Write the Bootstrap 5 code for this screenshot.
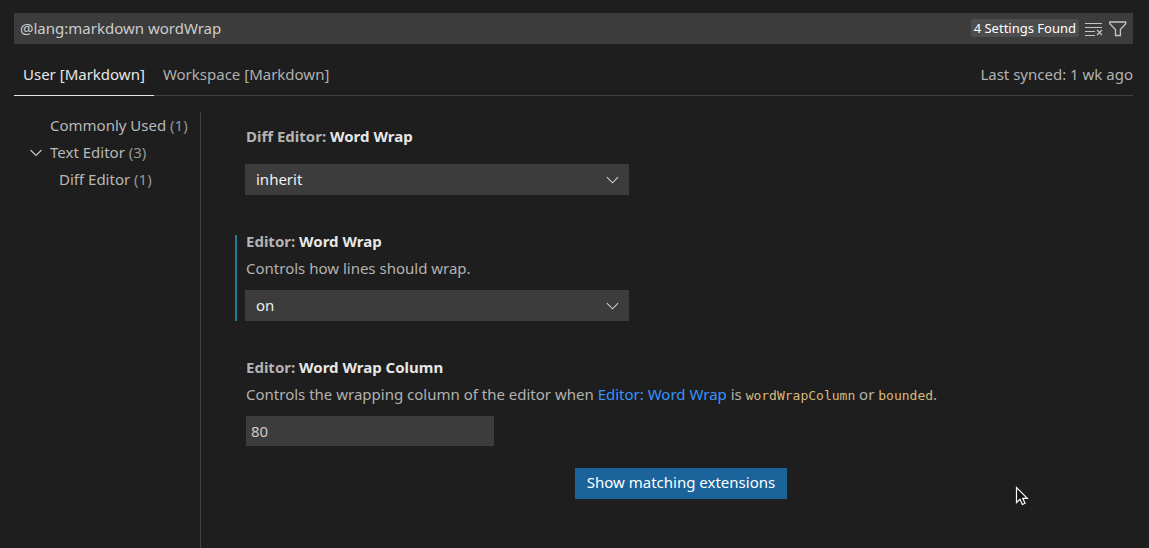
<!DOCTYPE html>
<html lang="en">
<head>
<meta charset="utf-8">
<meta name="viewport" content="width=device-width, initial-scale=1">
<title>Settings</title>
<link href="https://cdn.jsdelivr.net/npm/bootstrap@5.3.0/dist/css/bootstrap.min.css" rel="stylesheet">
<style>
  body { background: #1e1e1e; color: #b2b2b2; font: 15px/22px "Noto Sans", "Open Sans", sans-serif; }
  .settings { padding: 13px 16px 0 14px; }
  .search-bar { background: #3c3c3c; height: 31px; padding: 0 6px 2px 0; }
  .search-bar .form-control { padding: 0 6px; }
  .form-control, .form-select, .form-control:focus, .form-select:focus {
    background-color: #3c3c3c; color: #ccc; border: 0; border-radius: 0; box-shadow: none;
    font-size: 15px; line-height: 22px;
  }
  .found { background: #4d4d4d; color: #fff; font-size: 13px; line-height: 18px; padding: 0 3px; border-radius: 3px; }
  .icon-btn { background: none; border: 0; padding: 0; width: 18px; height: 18px; display: flex; color: #c5c5c5; margin-left: 6px; }
  .scopes { border-bottom: 1px solid #414141; margin-top: 10px; }
  .scope { background: none; border: 0; border-bottom: 1px solid transparent; color: #b0b0b0; padding: 9px 9px 10px; margin-bottom: -1px; }
  .scope.active { color: #e7e7e7; border-color: #e7e7e7; }
  .synced { padding-top: 9px; }
  .toc { flex: 0 0 187px; border-right: 1px solid #414141; }
  .toc a { display: flex; align-items: center; color: #b8b8b8; text-decoration: none; line-height: 27px; padding-left: 36px; white-space: pre; }
  .toc .parent { padding-left: 16px; }
  .toc .child { padding-left: 45px; line-height: 26px; }
  .toc span { color: #969696; }
  .options { padding: 18px 6px 48px 34px; }
  .option { padding-left: 11px; margin-bottom: 40px; }
  .option h2 { font-size: 15px; line-height: 12px; font-weight: 700; color: #b4b4b4; margin: 0; }
  .option h2 b { color: #e7e7e7; font-weight: 700; }
  .option h2.lone { margin-bottom: 22px; }
  .option p { margin: 10px 0 11px; }
  .option a { color: #3794ff; text-decoration: none; }
  .option code { font: 13px/16px "DejaVu Sans Mono", monospace; color: #d7ba7d; }
  .option .form-select { color: #f0f0f0; max-width: 384px; height: 31px; padding: 0 32px 1px 11px; margin-left: -1px;
    background-image: url("data:image/svg+xml,%3Csvg xmlns='http://www.w3.org/2000/svg' viewBox='0 0 14 8'%3E%3Cpath fill='none' stroke='%23d0d0d0' stroke-width='1.2' d='m1 1 6 6 6-6'/%3E%3C/svg%3E");
    background-size: 13px 8px; background-position: right 10px center; }
  .option .form-control { max-width: 248px; height: 30px; padding: 0 5px; }
  .modified { border-left: 2px solid #1b7e9c; padding-left: 9px; }
  .extensions, .extensions:hover { background: #1a639b; color: #fff; border: 0; border-radius: 0; padding: 3px 12px 6px; font-size: 15px; line-height: 22px; }
  .apply { margin-top: 22px; }
  .pointer { right: 120px; bottom: 41px; pointer-events: none; }
</style>
</head>
<body>
<div class="settings d-flex flex-column min-vh-100 position-relative">
  <div class="search-bar d-flex align-items-center">
    <input class="form-control flex-fill" type="text" aria-label="Search settings" value="@lang:markdown wordWrap">
    <span class="found text-nowrap">4 Settings Found</span>
    <button class="icon-btn" type="button" aria-label="Clear search">
      <svg width="18" height="18" viewBox="0 0 18 18" fill="none" stroke="currentColor" stroke-width="1.2"><path d="M0 4.500h17M0 8.500h17M0 12.500h10M0 16.500h10M12 11l5 5M17 11l-5 5"/></svg>
    </button>
    <button class="icon-btn" type="button" aria-label="Filter settings">
      <svg width="18" height="18" viewBox="0 0 18 18" fill="none" stroke="currentColor" stroke-width="1.3"><path d="M.8 3h15.900v1.800l-5.300 5.800v5.900H6.500v-5.900L.8 4.800z"/></svg>
    </button>
  </div>
  <div class="scopes d-flex align-items-start">
    <button class="scope active" type="button">User [Markdown]</button>
    <button class="scope" type="button">Workspace [Markdown]</button>
    <div class="synced ms-auto">Last synced: 1 wk ago</div>
  </div>
  <div class="d-flex flex-fill pt-3">
    <nav class="toc" aria-label="Setting groups">
      <a href="#">Commonly Used <span>(1)</span></a>
      <a class="parent" href="#"><svg class="me-2" width="12" height="8" viewBox="0 0 12 8" fill="none" stroke="#c5c5c5" stroke-width="1.2"><path d="m.5 1 5.500 5.500 5.500-5.500"/></svg>Text Editor <span>(3)</span></a>
      <a class="child" href="#">Diff Editor <span>(1)</span></a>
    </nav>
    <main class="options flex-fill">
      <section class="option">
        <h2 class="lone"><label for="diffWrap">Diff Editor: <b>Word Wrap</b></label></h2>
        <select class="form-select" id="diffWrap"><option>off</option><option>on</option><option selected>inherit</option></select>
      </section>
      <section class="option modified">
        <h2><label for="wrap">Editor: <b>Word Wrap</b></label></h2>
        <p>Controls how lines should wrap.</p>
        <select class="form-select" id="wrap"><option>off</option><option selected>on</option><option>wordWrapColumn</option><option>bounded</option></select>
      </section>
      <section class="option mb-0">
        <h2><label for="wrapColumn">Editor: <b>Word Wrap Column</b></label></h2>
        <p>Controls the wrapping column of the editor when <a href="#wrap">Editor: Word Wrap</a> is <code>wordWrapColumn</code> or <code>bounded</code>.</p>
        <input class="form-control" id="wrapColumn" type="text" inputmode="numeric" value="80">
      </section>
      <div class="apply text-center"><button class="btn extensions" type="button">Show matching extensions</button></div>
    </main>
  </div>
  <svg class="pointer position-absolute" width="14" height="21" viewBox="0 0 14 21" aria-hidden="true"><path d="M1.500 1.500v15l3.500-3.300 2.400 5.300 2.600-1.200-2.300-5h4.600z" fill="#111" stroke="#fff" stroke-width="1.200"/></svg>
</div>
<script src="https://cdn.jsdelivr.net/npm/bootstrap@5.3.0/dist/js/bootstrap.bundle.min.js"></script>
</body>
</html>
